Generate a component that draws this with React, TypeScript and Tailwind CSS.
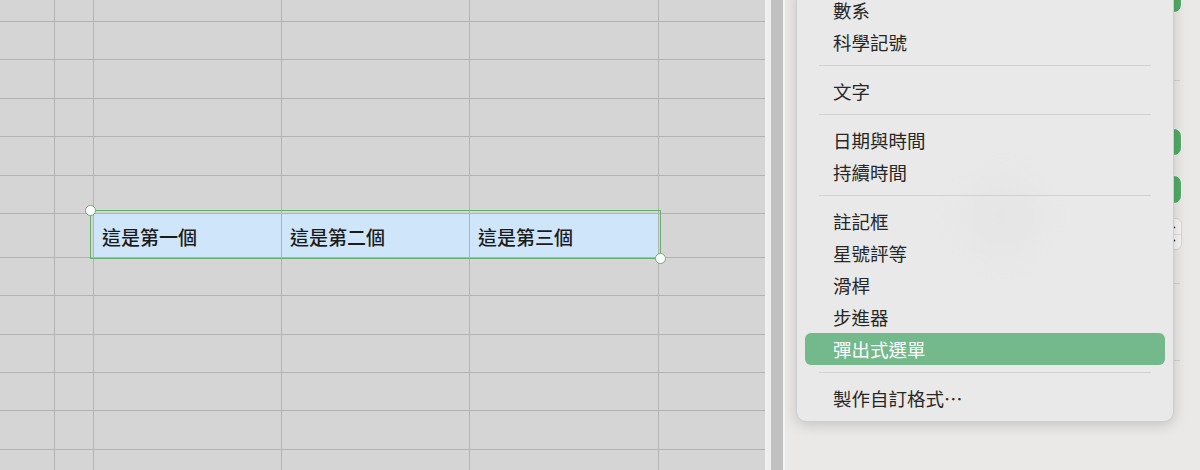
import React from "react";

const font = { fontFamily: '"Noto Sans CJK TC", "Noto Sans", sans-serif' };

// column widths incl. right grid line
const colClasses = ["w-[55px]", "w-[39px]", "w-[188px]", "w-[188px]", "w-[189px]", "flex-1"];
const rowClasses = [
  "h-[22px]",
  "h-[38px]",
  "h-[39px]",
  "h-[38px]",
  "h-[39px]",
  "h-[38px]",
  "h-[44px]",
  "h-[38px]",
  "h-[39px]",
  "h-[38px]",
  "h-[38px]",
  "h-[39px]",
  "h-[30px]",
];
const selectedRow = 6;
const selectedText = ["這是第一個", "這是第二個", "這是第三個"];

type MenuEntry = { label: string; active?: boolean } | "sep";

const menu: MenuEntry[] = [
  { label: "數系" },
  { label: "科學記號" },
  "sep",
  { label: "文字" },
  "sep",
  { label: "日期與時間" },
  { label: "持續時間" },
  "sep",
  { label: "註記框" },
  { label: "星號評等" },
  { label: "滑桿" },
  { label: "步進器" },
  { label: "彈出式選單", active: true },
  "sep",
  { label: "製作自訂格式⋯" },
];

function Sheet() {
  return (
    <div className="relative w-[765px] h-full bg-[#d5d5d5] flex flex-col overflow-hidden">
      {rowClasses.map((rc, r) => (
        <div key={r} className={`${rc} flex border-b border-[#b3b3b3] shrink-0`}>
          {colClasses.map((cc, c) => {
            const sel = r === selectedRow && c >= 2 && c <= 4;
            return (
              <div
                key={c}
                className={`${cc} ${c < 5 ? "border-r border-[#b3b3b3]" : ""} ${
                  sel ? "bg-[#cfe6fa] flex items-center pl-[8px] pt-[2px]" : ""
                } shrink-0`}
              >
                {sel && (
                  <span className="text-[19px] font-medium text-[#1b1b1b] leading-none" style={font}>
                    {selectedText[c - 2]}
                  </span>
                )}
              </div>
            );
          })}
        </div>
      ))}
      {/* selection outline */}
      <div className="absolute left-[90px] top-[210px] w-[571px] h-[49px] border-[1.5px] border-[#62b26e]" />
      <div className="absolute left-[85px] top-[205px] w-[11px] h-[11px] rounded-full bg-white border-[1.5px] border-[#62b26e]" />
      <div className="absolute left-[655px] top-[253px] w-[11px] h-[11px] rounded-full bg-white border-[1.5px] border-[#62b26e]" />
    </div>
  );
}

function Stepper() {
  return (
    <div className="mt-[14px] mr-[18px] w-[20px] h-[32px] rounded-[6px] bg-[#f6f5f5] border border-[#d8d5d5] flex flex-col items-center">
      <div className="flex-1 flex items-center justify-center border-b border-[#dedbdb] w-full">
        <svg width="8" height="5" viewBox="0 0 8 5">
          <path d="M1 4 L4 1 L7 4" fill="none" stroke="#222" strokeWidth="1.4" />
        </svg>
      </div>
      <div className="flex-1 flex items-center justify-center w-full">
        <svg width="8" height="5" viewBox="0 0 8 5">
          <path d="M1 1 L4 4 L7 1" fill="none" stroke="#222" strokeWidth="1.4" />
        </svg>
      </div>
    </div>
  );
}

function Sidebar() {
  return (
    <div className="relative flex-1 h-full bg-[#ebe8e8] overflow-hidden">
      <div className="flex flex-col items-end">
        <div className="mt-[-20px] mr-[18px] w-[60px] h-[33px] rounded-[8px] bg-[#52ab66] border border-[#f7f7f7]" />
        <div className="mt-[67px] mr-[20px] w-[200px] h-px bg-[#d3d0d0]" />
        <div className="mt-[47px] mr-[18px] w-[60px] h-[28px] rounded-[8px] bg-[#52ab66] border border-[#f7f7f7]" />
        <div className="mt-[19px] mr-[18px] w-[60px] h-[29px] rounded-[8px] bg-[#52ab66] border border-[#f7f7f7]" />
        <Stepper />
        <div className="mt-[33px] mr-[20px] w-[200px] h-px bg-[#d3d0d0]" />
        <div className="mt-[76px] mr-[20px] w-[200px] h-px bg-[#d3d0d0]" />
      </div>

      {/* format popup menu */}
      <div
        className="absolute left-[11px] top-[-15px] w-[378px] rounded-[10px] border border-[#cdcdcd] bg-[#e9e9e9] pt-[8px] pb-[7px] shadow-[0_3px_14px_rgba(0,0,0,0.16)] overflow-hidden"
        style={font}
      >
        <div className="absolute left-[165px] top-[190px] w-[80px] h-[80px] rounded-full bg-[#e4e2e2] blur-[14px] opacity-50" />
        {menu.map((m, i) =>
          m === "sep" ? (
            <div key={i} className="relative pt-[7px] pb-[9px] px-[22px]">
              <div className="h-px bg-[#d2d2d2]" />
            </div>
          ) : (
            <div
              key={i}
              className={`relative mx-[8px] h-[32px] pl-[28px] flex items-center rounded-[6px] text-[18.5px] leading-none ${
                m.active ? "bg-[#74b98b] text-white" : "text-[#272727]"
              }`}
            >
              {m.label}
            </div>
          )
        )}
      </div>
    </div>
  );
}

export default function App() {
  return (
    <div className="w-[1200px] h-[470px] flex overflow-hidden bg-[#d5d5d5]">
      <Sheet />
      <div className="w-[6px] h-full bg-[#efefef]" />
      <div className="w-[12px] h-full bg-[#c1c1c1]" />
      <div className="w-[2px] h-full bg-[#f4f4f4]" />
      <Sidebar />
    </div>
  );
}
